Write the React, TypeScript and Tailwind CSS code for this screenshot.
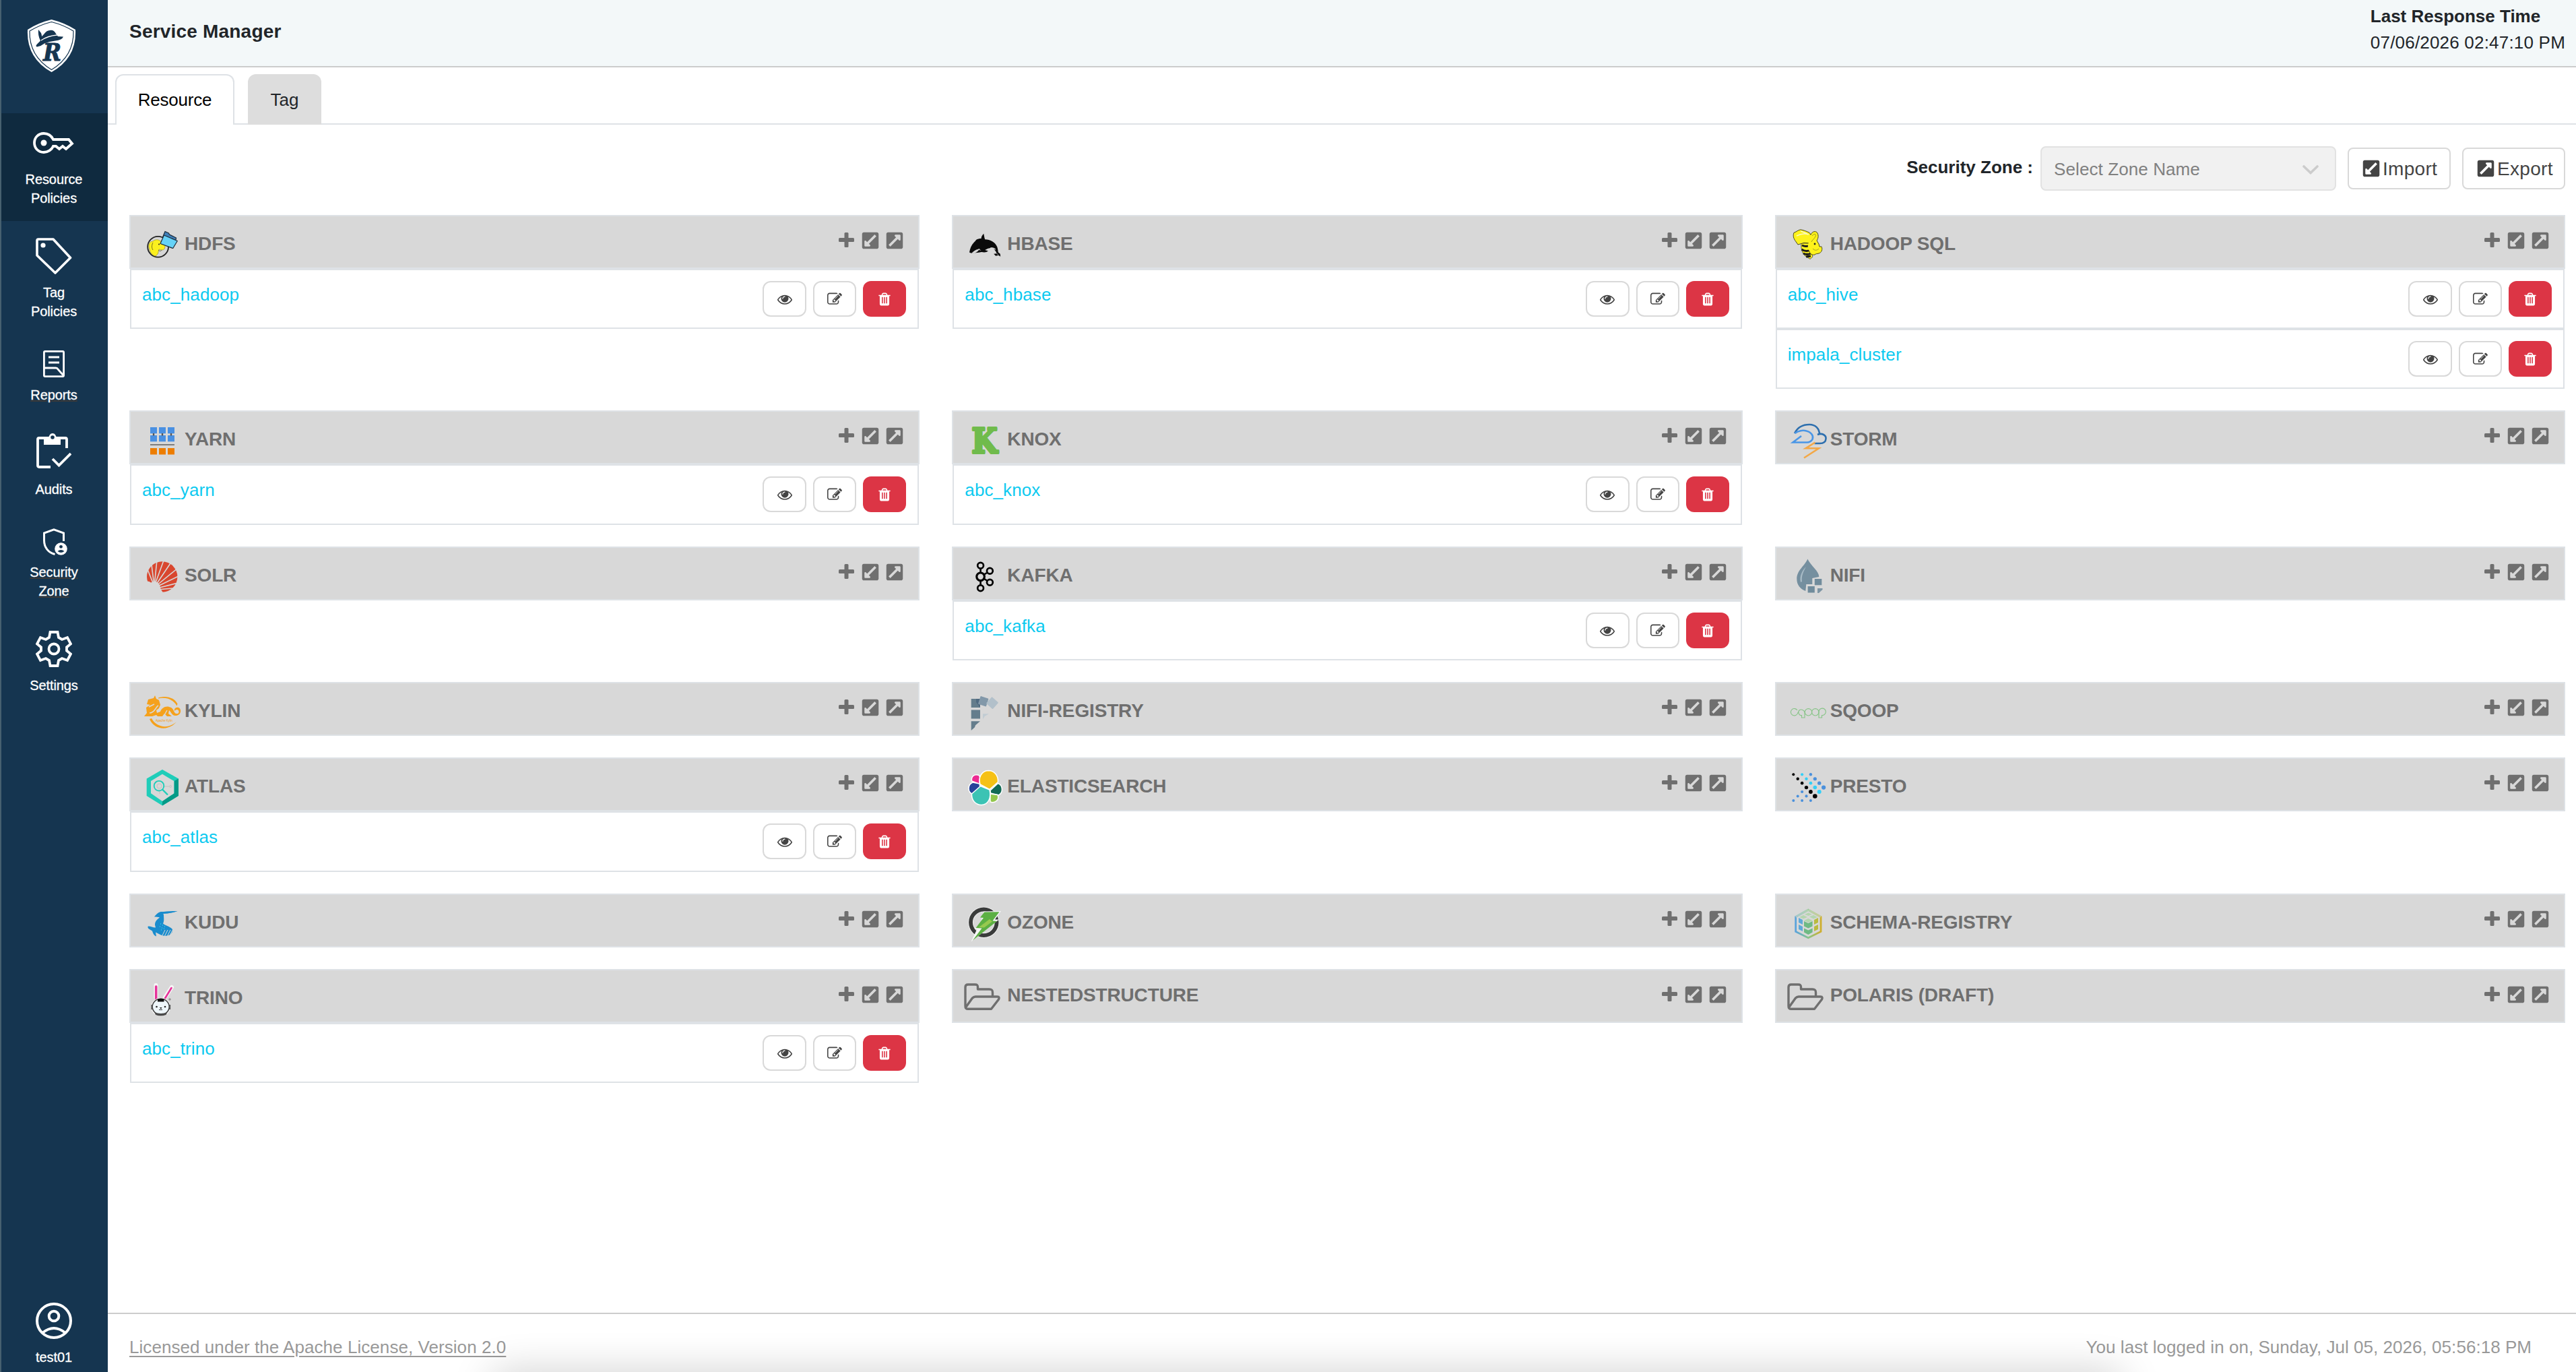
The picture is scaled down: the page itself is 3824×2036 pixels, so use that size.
import React from "react";
import { FaExternalLinkSquareAlt } from "react-icons/fa";

const GREY = "#d8d8d8";

/* ---------- service logos, drawn in a 60x60 window of the card header ---------- */

const logos: Record<string, React.ReactNode> = {
  hdfs: (
    <g>
      <circle cx="42.6" cy="47.3" r="15.4" fill="#d6d6d6" stroke="#222" strokeWidth="1.8" />
      <path d="M29.500 50c-2-6 1-11 5.500-11 3-3 9-3 11 0 4 0 7 3 7 6 0 5-1 7-5 7-2 0-3-1-4-1l-1 4c0 3-2 4-4 6-5-1-7-4-8.500-8z" fill="#fbf01e" stroke="#8b8420" strokeWidth=".6" />
      <path d="M35 41c-2 4-2 8 0 11M43 52c2 2 4 2 5 0" fill="none" stroke="#55511a" strokeWidth=".8" />
      <circle cx="44" cy="43.500" r="1" fill="#222" />
      <path d="M49.500 33l3.500-8.500 5.500 2.500 1 2 10 5-1 5z" fill="#3f7fb8" stroke="#1d2b3a" strokeWidth="1.200" />
      <path d="M51.500 30L71.300 38.500 64.700 49.500 46 42.500z" fill="#66d2f7" stroke="#1d2b3a" strokeWidth="1.200" strokeLinejoin="round" />
    </g>
  ),
  yarn: (
    <g>
      {[31, 44, 57].map((x) => (
        <g key={x}>
          <rect x={x} y="25" width="10" height="9.300" fill="#4a90e2" />
          <rect x={x} y="37" width="10" height="9.300" fill="#4a90e2" />
          <rect x={x + 3.8} y="34" width="2.400" height="3.500" fill="#555" />
          <rect x={x} y="56" width="10" height="9.500" fill="#ed7d00" />
        </g>
      ))}
      <rect x="31" y="50" width="36" height="2" fill="#7d7d7d" />
    </g>
  ),
  solr: (
    <g>
      <circle cx="48.700" cy="45" r="22.700" fill="#d9472f" />
      <path d="M37 59L24 52M37 59L27 34M37 59L33 27M37 59L41 20M37 59L52 18M38 59L63 22M39 59L72 32M40 60L75 43M41 62L76 53M42 64L75 61" stroke={GREY} strokeWidth="1.600" />
      <path d="M22 51L29.500 52 32 53.500 38 51.500 42 53.500 45 57 46 60.500 46.500 63 51 70H22z" fill={GREY} />
    </g>
  ),
  kylin: (
    <g fill="#f5a11c">
      <path d="M43 23.500c12-4 24 0 28.500 9l-1 3C65 26 55 22 43 24.500z" />
      <path d="M30 55l3-1c7 13 24 17 37 5-11 14-33 13-40-4z" />
      <path d="M28 26l8-2 2-4 2 5 4 2 2 7-2 5-4 3 1 4 5-2c2-6 9-10 16-6 5 3 4 9 8 9 4 1 5-5 1-6-2 0-3 1-4 2-1-4 3-6 6-5 5 2 4 11-3 12-7 1-8-6-11-8l-1 5 5 4h-7l-4-4-3 4h-7l-2-2-6 2H22l4-5-1-8 6-4-5-1z" />
      <path d="M30 46c8 0 9-9 13-11M51 51l5-9M29 37l8-4" stroke={GREY} strokeWidth="1.500" fill="none" />
      <text x="39" y="58.500" fontSize="4.500" textLength="25" fontFamily="Liberation Sans">Apache Kylin</text>
    </g>
  ),
  atlas: (
    <g>
      <path d="M49 18l24 13.500v25L49 71.500 25.700 57V31.500z" fill="#20cdb9" />
      <path d="M73 31.500v25.500L49 71.500V64l17.500-10.500V35z" fill="#049a87" />
      <path d="M49 24.800l17.300 10.200v18.300L49 65 32 53.300V35z" fill={GREY} />
      <path d="M50 43h9M45 49v5" stroke="#bdbdbd" strokeWidth=".8" />
      <circle cx="61" cy="43" r="1.500" fill="none" stroke="#bdbdbd" strokeWidth=".7" />
      <circle cx="44.500" cy="42.500" r="3.500" fill="none" stroke="#bdbdbd" strokeWidth=".8" />
      <circle cx="44" cy="42.200" r="7.300" fill="none" stroke="#20cdb9" strokeWidth="1.900" />
      <path d="M49 47.500l8 8" stroke="#20cdb9" strokeWidth="2.400" />
    </g>
  ),
  kudu: (
    <g>
      <path d="M71.700 26c-8-.5-17 1-25 1-4 1-7 4-9.700 7.500 3 0 6 0 8 1-4 3-7 6-7 11l1 4c-4 0-7-2-11-2-1 1-.5 3 1 4l5 3c1 4 3 7 6 8l-1-6 8 4c5 2 12 2 15-2 3-3 3-7-1-9-4-3-8-3-11-6 2-4 1-8 1-14 7 0 14-1 20.700-4z" fill="#1a8ccd" />
      <path d="M50 29.500q11 0 23-4v6H51z" fill={GREY} />
      <path d="M46 27.500q13 0 25.500-1.500-11 4-22 4z" fill="#1a8ccd" />
      <path d="M52 64l5-10M56 64l5-10M60 62.500l4-8M49 62l4-8" stroke={GREY} strokeWidth="1" />
      <path d="M46 45h1M49 47h1M45 49h1M48 51h1M52 49h1M47 54h1M51 52h1" stroke="#2fd0f0" strokeWidth="1.300" />
    </g>
  ),
  trino: (
    <g>
      <path d="M39.500 42V24M53 42l10-15" stroke="#f6f6f6" strokeWidth="6" strokeLinecap="round" />
      <path d="M39.700 44V26" stroke="#e6329a" strokeWidth="3.500" strokeLinecap="round" />
      <path d="M53 43.500L62.500 28" stroke="#e6329a" strokeWidth="2.600" strokeLinecap="round" />
      <ellipse cx="46.700" cy="56.500" rx="14.300" ry="13.800" fill="#f4f4f4" />
      <ellipse cx="46.700" cy="56" rx="12.500" ry="11.700" fill="#eef6fa" stroke="#3c3c3c" strokeWidth="1.500" />
      <path d="M42 44.500q5-1.500 9.500 0v4h-9.500z" fill="#111" />
      <path d="M33.500 53v7M60 53v7" stroke="#555" strokeWidth="2.200" />
      <path d="M37 64q10 4 19.500 0l-2 4q-8 3-15.500 0z" fill="#4a4a4a" />
      <circle cx="40.500" cy="56" r="1.300" fill="#222" />
      <circle cx="53" cy="56" r="1.300" fill="#222" />
      <path d="M45.500 57.500h2.500l-1.200 1.500zM44 60.500h5" stroke="#222" strokeWidth=".9" fill="#222" />
      <path d="M60 43v4M58 45h4" stroke="#777" strokeWidth=".8" />
    </g>
  ),
  hbase: (
    <g>
      <path d="M47.200 27.800c.8 3 1 6 2 8.500 8 0 15 4 18 11 1 3 1.500 6 1.500 8l3 2.500.5 4-3-2-4 1-3-3 4-.5c0-3-3-7-8-8.500-5 1-9 2.500-10 5-6 2-13 3-20 2.700l-2.200-1c1-6 3-11 7-15l2-2 1-1.500c2-1.500 5-2 7.500-2 .5-3 1.500-5 3.700-7.200z" fill="#0a0a0a" />
      <path d="M30 56.500c5-5 8-5 11-6-2 3-5 5-7 6zM57 49c3-1 6 0 8 2-3-.5-6 0-8 0zM65 56l4 3" fill={GREY} stroke={GREY} strokeWidth=".7" />
      <path d="M40 51q7 5 14 1" fill="none" stroke={GREY} strokeWidth="1" />
      <path d="M40 53.500q6-3.500 14 0-5 4-14 0z" fill="#0a0a0a" />
    </g>
  ),
  knox: (
    <g>
      <text x="29.500" y="63" fontFamily="DejaVu Serif" fontWeight="bold" fontSize="51" textLength="38" lengthAdjust="spacingAndGlyphs" fill="#70bb4c" stroke="#70bb4c" strokeWidth="4" strokeLinejoin="round">K</text>
    </g>
  ),
  kafka: (
    <g fill="none" stroke="#000">
      <path d="M42.600 33v5M42.600 51v6M48 41.500l4-2.500M48 48l4 2.500" strokeWidth="2.600" />
      <circle cx="42.600" cy="44.800" r="5.800" strokeWidth="3.200" />
      <circle cx="42.600" cy="28.300" r="4.400" strokeWidth="2.700" />
      <circle cx="42.600" cy="61.800" r="4.400" strokeWidth="2.700" />
      <circle cx="56.400" cy="36.300" r="4.400" strokeWidth="2.700" />
      <circle cx="56.400" cy="53.300" r="4.400" strokeWidth="2.700" />
    </g>
  ),
  hive: (
    <g strokeLinejoin="round">
      <path d="M39 42c-1 7 1 15 6 19l7 4.500 4-3.500c-3-7-1-14-3-20z" fill="#fdf21c" stroke="#333" strokeWidth=".7" />
      <path d="M40 45c4 2 8 2 12 0M39.500 51c4 3 9 3 13 1M42 57c4 2 7 2 11 0M46 62l7-1" stroke="#1b1b1b" strokeWidth="3" fill="none" />
      <path d="M37.500 21.800c-4 1-7 4-9.500 4.500-2 5 0 9 2 12l4 5.500 9-2.500 10 1 3-8-5-8c-4-2-9-4-13.500-4.500z" fill="#fdf21c" />
      <path d="M53 42l-10-.7-9 2.700-4-5.700c-2-3-4-7-2-12 2.500-.5 5.500-3.500 9.500-4.500 4.500.5 9.500 2.500 13.500 4.500l2 3" fill="none" stroke="#4c4a1c" strokeWidth="1" />
      <path d="M32 31c6-3 12-4 18-2M38 24l10 4" stroke="#f9f9c0" strokeWidth="1.500" fill="none" />
      <path d="M53 30c2-6 8-7 10-3 2 4 1 8-1 11l3 5 1 4 3 0c2 4 0 9-4 10-3 1-4 0-6 2-4 1-7-1-8-5-3-6-3-11 1-17z" fill="#fdf21c" />
      <path d="M53 29.500c2-5.500 8-6.500 10-2.500 2 4 1 8-1 11l3 5 1 4h3c2 4 0 9-4 10-3 1-4 0-6 2-4 1-7-1-8-5" fill="none" stroke="#4c4a1c" strokeWidth="1" />
      <path d="M55 31c3-4 7-3 5 1s-5 5-6 8M56 50c3 3 6 3 9 0" fill="none" stroke="#8f8a20" strokeWidth=".8" />
      <circle cx="59" cy="43" r="1.400" fill="#222" />
    </g>
  ),
  storm: (
    <g fill="none">
      <path d="M29 34c4-8 12-13 22-13 9 0 15 6 15 15M63 36c7-3 13 1 12.500 6-.3 5-4 7-9 7h-8" stroke="#2d6fae" strokeWidth="2.600" />
      <path d="M29.500 34c5-4 12-5 17-3.500 8 2 11 8 9 12.500-2 3-5 4.500-8 4.500H26.500L39 38" stroke="#4a96e6" strokeWidth="2.600" />
      <path d="M59.500 47.500L45.500 56.300H65L43 70.500" stroke="#f3a847" strokeWidth="2.600" />
    </g>
  ),
  nifi: (
    <g>
      <path d="M48.300 18.400C44 29 32.300 35 32.300 48c0 9 5 15 13 18l1-10h9v-9l10-2c0-9-12-16-17-26.600z" fill="#758f9f" />
      <path d="M38 53c-2-9 2-17 8-23-4 8-7 13-6 22z" fill="#a8bbc6" />
      <rect x="58.800" y="48" width="10.500" height="9.300" fill="#718c9c" />
      <rect x="48.600" y="59" width="10.200" height="9.500" fill="#718c9c" />
      <path d="M63 62h7.500v2L65 69h-2z" fill="#7d95a4" />
    </g>
  ),
  nifireg: (
    <g>
      <path d="M28.700 25H42v13H28.700zM28.700 41.400H42v13.200H28.700zM28.700 58.300H42l-7 6-1 3-5.300 4.700z" fill="#647d8c" />
      <path d="M36 25h6v13l-6-8z" fill="#4f6a80" />
      <rect x="40.500" y="22.500" width="12.500" height="12.500" rx="1" transform="rotate(18 46.700 28.700)" fill="#8298a9" />
      <rect x="53.500" y="24.700" width="13" height="13" rx="1" transform="rotate(42 60 31.200)" fill="#b2c0ca" />
      <path d="M46 47.300h9l-6 3.500-3 4.500z" fill="#c1ccd3" />
    </g>
  ),
  elastic: (
    <g stroke="#fff" strokeWidth="1.500" strokeLinejoin="round">
      <path d="M29.500 35c-1-7 4-11 11-8.500l1 3-.5 10z" fill="#ec2a92" />
      <path d="M31 37l10 2 1 6-11 9.500c-8-3-8-14 0-17.500z" fill="#27439a" />
      <path d="M68.500 38.500c8 3 7.500 14 1 17.500l-12-3-.5-4z" fill="#136a55" />
      <path d="M57 54l11 1.500c3 7-3 13-11 10.500z" fill="#93c64c" />
      <path d="M42 40c-3-10 2-20 12-20.500 9 0 15 7 14.500 17L56 47.500z" fill="#f6c115" />
      <path d="M42.500 42.500L56 48c3 12-2 22-12 22.500-9 0-15-7-14.500-16.500z" fill="#3cc3b4" />
    </g>
  ),
  ozone: (
    <g>
      <circle cx="47.300" cy="42.800" r="19.300" fill="none" stroke="#f2f2f2" strokeWidth="7.600" />
      <circle cx="47.300" cy="42.800" r="19.300" fill="none" stroke="#3a3b3b" strokeWidth="5.800" />
      <path d="M47.300 26.500L73 26l-9 12.500h6L28.500 71.500l9-19h-4l9.500-10z" fill="#f6f6f6" />
      <path d="M48.300 27.500L70.500 27.200 60.500 40.400l6.500.6L31 69.500 44.500 51.500l-9-.5L47 36l-5-.5z" fill="#5cb043" />
      <path d="M56 38l-8 6-8 6 8 .5 12-9z" fill="#97c94f" />
    </g>
  ),
  folder: (
    <g fill="none" stroke="#6f6f6f" strokeWidth="3.400" strokeLinejoin="round">
      <path d="M60.500 40v-5c0-3.500-1-5-5-5H38.500v-3c0-3-1-4-4-4H24c-3 0-4 1.500-4 4v28c0 3 1 4.300 4 4.300h34.500L69.500 45c1-2 1-4-2-4H35c-2 0-3 .5-4.500 2L20.500 57" />
    </g>
  ),
  sqoop: (
    <g fill="none" stroke="#86c486" strokeWidth="1.100">
      <path d="M33 42a5.200 5.200 0 1 0 0 5.500l3-5.500a5.200 5.200 0 0 1 8 3v8h-4.500v-3.500h-2a5.200 5.200 0 0 1-2-7" />
      <circle cx="49.500" cy="44.800" r="5.200" />
      <circle cx="59.800" cy="44.800" r="5.200" />
      <path d="M65 53v-8a5.200 5.200 0 1 1 5.500 4.500h-1V53H65z" />
    </g>
  ),
  presto: (
    <g>
      {[
        [0, 0, 0, 2], [1, 1, 0, 2.2], [2, 2, 0, 2.3], [3, 3, 0, 2.7], [4, 4, 0, 2.9], [5, 5, 0, 3.3],
        [2, 0, 1, 2.1], [3, 1, 1, 2.2], [4, 2, 1, 2.4], [5, 3, 1, 2.8], [6, 4, 1, 3],
        [4, 0, 2, 2.2], [5, 1, 2, 2.6], [6, 2, 2, 2.7], [7, 3, 2, 3.1],
        [2, 4, 2, 2.1], [1, 5, 2, 2], [3, 5, 2, 2.1], [0, 6, 2, 2], [2, 6, 2, 2], [4, 6, 2, 2],
      ].map(([c, r, k, s]) => (
        <circle key={`${c}-${r}`} cx={27.3 + c * 6.4} cy={25.3 + r * 6.43} r={s} fill={["#000", "#33cff7", "#4a90dc"][k]} />
      ))}
    </g>
  ),
  schema: (
    <g>
      <defs>
        <linearGradient id="schemaEdge" x1="0" x2="1" y1="0" y2="0">
          <stop offset="0" stopColor="#5aa3dc" />
          <stop offset=".5" stopColor="#86c58a" />
          <stop offset="1" stopColor="#cfae2c" />
        </linearGradient>
      </defs>
      <path d="M49.300 24.200L68 34.500v22L49.300 65.800 30.700 56.500v-22z" fill="none" stroke="url(#schemaEdge)" strokeWidth="2.800" />
      <path d="M49.300 24.200L68 34.500M49.300 24.200L30.700 34.500" stroke="#c6d9c0" strokeWidth="2.800" opacity=".7" />
      <path d="M35 36l6 3v7l-6-3zM35 46l6 3v7l-6-3z" fill="#5fa9d8" />
      <path d="M64 36l-6 3v7l6-3zM64 46l-6 3v7l6-3z" fill="#b9bb3f" />
      <path d="M43 41l6.300 3 6.300-3v7.500l-6.300 3-6.300-3zM43 51.500l6.300 3 6.300-3v6l-6.300 3.500-6.300-3.500z" fill="#6fba84" />
      <path d="M43 40l6.300-3 6.300 3-6.300 3zM36 35l6-3 6 3-6 2.500zM51 34.500l6-2.500 6 3-6 2.500zM44 31l5.500-2.500L55 31l-5.500 2z" fill="#b4d6ae" />
    </g>
  ),
};

const Logo = ({ name }: { name: string }) => (
  <svg viewBox="16 14 62 60" className="h-[60px] w-[62px] shrink-0 overflow-visible">{logos[name]}</svg>
);

/* ---------- small glyphs ---------- */

const Glyph = ({ d }: { d: string }) => (
  <svg viewBox="0 0 1792 1792" className="size-[22px]" fill="currentColor"><path d={d} /></svg>
);

const EYE = "M1664 960q-152-236-381-353 61 104 61 225 0 185-131.5 316.5t-316.5 131.5-316.5-131.5-131.5-316.5q0-121 61-225-229 117-381 353 133 205 333.5 326.5t434.5 121.5 434.5-121.5 333.5-326.5zm-720-384q0-20-14-34t-34-14q-125 0-214.5 89.5t-89.5 214.5q0 20 14 34t34 14 34-14 14-34q0-86 61-147t147-61q20 0 34-14t14-34zm848 384q0 34-20 69-140 230-376.5 368.5t-499.5 138.5-499.5-139-376.5-368q-20-35-20-69t20-69q140-229 376.5-368t499.5-139 499.5 139 376.5 368q20 35 20 69z";
const EDIT = "M888 1184l116-116-152-152-116 116v56h96v96h56zm440-720q-16-16-33 1l-350 350q-17 17-1 33t33-1l350-350q17-17 1-33zm80 594v190q0 119-84.5 203.5t-203.5 84.5h-832q-119 0-203.5-84.5t-84.5-203.5v-832q0-119 84.5-203.5t203.5-84.5h832q63 0 117 25 15 7 18 23 3 17-9 29l-49 49q-14 14-32 8-23-6-45-6h-832q-66 0-113 47t-47 113v832q0 66 47 113t113 47h832q66 0 113-47t47-113v-126q0-13 9-22l64-64q15-15 35-7t20 29zm-96-738l288 288-672 672h-288v-288zm444 132l-92 92-288-288 92-92q28-28 68-28t68 28l152 152q28 28 28 68t-28 68z";
const TRASH = "M704 1376v-704q0-14-9-23t-23-9h-64q-14 0-23 9t-9 23v704q0 14 9 23t23 9h64q14 0 23-9t9-23zm256 0v-704q0-14-9-23t-23-9h-64q-14 0-23 9t-9 23v704q0 14 9 23t23 9h64q14 0 23-9t9-23zm256 0v-704q0-14-9-23t-23-9h-64q-14 0-23 9t-9 23v704q0 14 9 23t23 9h64q14 0 23-9t9-23zm-544-992h448l-48-117q-7-9-17-11h-317q-10 2-17 11zm928 32v64q0 14-9 23t-23 9h-96v948q0 83-47 143.5t-113 60.5h-832q-66 0-113-58.5t-47-141.5v-952h-96q-14 0-23-9t-9-23v-64q0-14 9-23t23-9h309l70-167q15-37 54-63t79-26h320q40 0 79 26t54 63l70 167h309q14 0 23 9t9 23z";

const Plus = () => (
  <svg viewBox="0 0 23 22" className="h-[22px] w-[23px]" fill="currentColor">
    <rect x="0" y="8" width="23" height="6" rx="1.500" />
    <rect x="8.500" y="0" width="6" height="22" rx="1.500" />
  </svg>
);

const HeaderActions = () => (
  <div className="flex pt-6 text-[#6f6f6f]">
    <Plus />
    <FaExternalLinkSquareAlt className="ml-2.5 -mt-0.5 size-7 rotate-180" />
    <FaExternalLinkSquareAlt className="ml-2 -mt-0.5 size-7" />
  </div>
);

/* ---------- service cards ---------- */

type Service = { name: string; logo: string; items?: string[]; tall?: boolean };

const Card = ({ name, logo, items = [], tall = false }: Service) => (
  <div>
    <div className="flex h-20 justify-between border-2 border-[#dee2e6] bg-[#d8d8d8] pr-[21px]">
      <div className="flex pl-[14px]">
        <div className="pt-3"><Logo name={logo} /></div>
        <div className={`pl-1 text-[28px] font-bold leading-8 tracking-[-0.15px] text-[#6f6f6f] ${logo === "folder" ? "pt-[21px]" : "pt-[25px]"}`}>{name}</div>
      </div>
      <HeaderActions />
    </div>
    <div className="mx-px">
      {items.map((item) => (
        <div key={item} className={`flex justify-between border-2 border-[#dee2e6] bg-white pl-4 pr-[17px] ${tall ? "h-[90px]" : "h-[89px]"}`}>
          <a className="pt-5 text-[26px] leading-8 tracking-[0.1px] text-[#0dcaf0]">{item}</a>
          <div className="flex gap-2.5 pt-4">
            <button className="flex h-[53px] w-[65px] items-center justify-center rounded-xl border-2 border-[#d9d9d9] text-[#444]"><Glyph d={EYE} /></button>
            <button className="flex h-[53px] w-16 items-center justify-center rounded-xl border-2 border-[#d9d9d9] text-[#444]"><Glyph d={EDIT} /></button>
            <button className="flex h-[53px] w-16 items-center justify-center rounded-xl bg-[#dc3545] text-white"><Glyph d={TRASH} /></button>
          </div>
        </div>
      ))}
    </div>
  </div>
);

const services: Service[] = [
  { name: "HDFS", logo: "hdfs", items: ["abc_hadoop"] },
  { name: "HBASE", logo: "hbase", items: ["abc_hbase"] },
  { name: "HADOOP SQL", logo: "hive", items: ["abc_hive", "impala_cluster"] },
  { name: "YARN", logo: "yarn", items: ["abc_yarn"], tall: true },
  { name: "KNOX", logo: "knox", items: ["abc_knox"], tall: true },
  { name: "STORM", logo: "storm" },
  { name: "SOLR", logo: "solr" },
  { name: "KAFKA", logo: "kafka", items: ["abc_kafka"] },
  { name: "NIFI", logo: "nifi" },
  { name: "KYLIN", logo: "kylin" },
  { name: "NIFI-REGISTRY", logo: "nifireg" },
  { name: "SQOOP", logo: "sqoop" },
  { name: "ATLAS", logo: "atlas", items: ["abc_atlas"], tall: true },
  { name: "ELASTICSEARCH", logo: "elastic" },
  { name: "PRESTO", logo: "presto" },
  { name: "KUDU", logo: "kudu" },
  { name: "OZONE", logo: "ozone" },
  { name: "SCHEMA-REGISTRY", logo: "schema" },
  { name: "TRINO", logo: "trino", items: ["abc_trino"] },
  { name: "NESTEDSTRUCTURE", logo: "folder" },
  { name: "POLARIS (DRAFT)", logo: "folder" },
];

/* ---------- sidebar ---------- */

const NavText = ({ lines, underline = false }: { lines: string[]; underline?: boolean }) => (
  <div className={`text-center text-[20px] leading-7 text-white tracking-[-0.1px] [-webkit-text-stroke:0.3px_white] ${underline ? "underline decoration-[#3a3a3a]" : ""}`}>
    {lines.map((l) => <div key={l}>{l}</div>)}
  </div>
);

const Sidebar = () => (
  <aside className="flex w-40 shrink-0 flex-col items-center border-l-2 border-[#47606f] bg-[#153550] pr-0.5">
    <div className="flex h-[168px] justify-center pr-[7px] pt-[29px]">
      <svg viewBox="0 0 73 78" className="h-[78px] w-[73px]">
        <path d="M36.500 0q20 5 35.500 15 2 42-35.500 63Q-1 57 1 15 16 5 36.500 0z" fill="#fff" />
        <path d="M36.500 3.500Q54 8 69 17q1 37-32.500 57.500Q3 54 4 17 19 8 36.500 3.500z" fill="none" stroke="#153550" strokeWidth="1.200" />
        <path d="M17 15l4 5q1 3 1 5l3-3q4-6 9-6 6-1 9 5l3 4q5 0 8 .5-2 5-12 6-9 1-16 4-5 4-11 5-3-1 0-4l5-5q-4-8-3-16.500z" fill="#153550" />
        <path d="M21 31q10-7 24-8" stroke="#fff" strokeWidth="1.500" fill="none" />
        <text x="24" y="61" fontFamily="DejaVu Serif" fontStyle="italic" fontWeight="bold" fontSize="35" textLength="27" lengthAdjust="spacingAndGlyphs" fill="#153550" stroke="#153550" strokeWidth="1">R</text>
      </svg>
    </div>
    <div className="-mr-0.5 flex h-40 w-[158px] flex-col items-center bg-[#0f2a3f] pr-0.5 pt-7">
      <svg viewBox="0 0 62 32" className="mb-6 h-8 w-[62px]" fill="none" stroke="#fff" strokeWidth="3.800">
        <path d="M30 11C27 5 22 2 16 2 8 2 2 8 2 16s6 14 14 14c6 0 12-4 14-9h4l5 4 5-4 5 4 9-8-5-6z" />
        <circle cx="16" cy="16" r="4.500" fill="#fff" stroke="none" />
      </svg>
      <NavText lines={["Resource", "Policies"]} />
    </div>
    <div className="flex h-[192px] flex-col items-center pt-[25px]">
      <svg viewBox="0 0 54 54" className="mb-[13px] size-[54px]" fill="none" stroke="#fff" strokeWidth="3.600" strokeLinejoin="round">
        <path d="M2 4q0-2 2-2h22l25.500 27.500L29 52 2 26z" />
        <circle cx="11" cy="11" r="3.600" fill="#fff" stroke="none" />
      </svg>
      <NavText lines={["Tag", "Policies"]} />
    </div>
    <div className="flex h-[123px] flex-col items-center">
      <svg viewBox="0 0 32 40" className="mb-3 h-10 w-8" fill="none" stroke="#fff" strokeWidth="2.800">
        <rect x="1.400" y="1.400" width="29.200" height="37.200" rx="1.500" />
        <path d="M8 10h16M8 18h16M1 26h18q2 0 3 2l8 9" />
      </svg>
      <NavText lines={["Reports"]} underline />
    </div>
    <div className="flex h-[141px] flex-col items-center">
      <svg viewBox="0 0 52 52" className="mb-[17px] size-[52px]" fill="none" stroke="#fff" strokeWidth="3.800">
        <path d="M21 50H4q-2 0-2-2V9q0-2 2-2h39q2 0 2 2v13M24 38l9.500 9.500L51 30" />
        <path d="M11 8h7q1-8 6-8t6 8h6v9H11z" fill="#fff" stroke="none" />
        <circle cx="24" cy="6" r="2.800" fill="#153550" stroke="none" />
      </svg>
      <NavText lines={["Audits"]} />
    </div>
    <div className="flex h-[152px] flex-col items-center pl-1">
      <svg viewBox="0 0 36 40" className="mb-[11px] h-10 w-9" fill="none" stroke="#fff" strokeWidth="3">
        <path d="M30.500 19V7L16 1.800 1.500 7v11c0 10 6 18 16 20.500" />
        <circle cx="26.500" cy="30.500" r="9.300" fill="#fff" stroke="none" />
        <circle cx="26.500" cy="27.300" r="2.400" fill="#153550" stroke="none" />
        <path d="M21.500 34q5-4 10 0-5 4-10 0z" fill="#153550" stroke="none" />
      </svg>
      <div className="pr-1"><NavText lines={["Security", "Zone"]} underline /></div>
    </div>
    <svg viewBox="0 0 54 54" className="mb-[13px] size-[54px] shrink-0" fill="none" stroke="#fff" strokeWidth="3.800">
      <path d="M21.500 2h11l1.500 8 5 3 8-3 5 9.500-6 5v5l6 5-5 9.500-8-3-5 3-1.500 8h-11L20 44l-5-3-8 3-5-9.500 6-5v-5l-6-5L7 10l8 3 5-3z" />
      <circle cx="27" cy="27" r="7.500" />
    </svg>
    <NavText lines={["Settings"]} />
    <div className="mt-auto flex flex-col items-center pb-2">
      <svg viewBox="0 0 54 54" className="mb-[13px] size-[54px]" fill="none" stroke="#fff" strokeWidth="4">
        <circle cx="27" cy="27" r="25" />
        <circle cx="27" cy="20" r="7.300" />
        <path d="M10 45q17-14 34 0" />
      </svg>
      <NavText lines={["test01"]} />
    </div>
  </aside>
);

export default function App() {
  return (
    <div className="relative flex h-[2036px] w-[3824px] overflow-hidden bg-white font-['Liberation_Sans',sans-serif] text-[#212529]">
      <Sidebar />
      <main className="flex min-w-0 flex-1 flex-col">
        <header className="flex h-[100px] shrink-0 justify-between border-b-2 border-[#ccc] bg-[#f3f8f9] pl-8 pr-4">
          <h1 className="pt-[31px] text-[28px] font-bold leading-8 tracking-[0.2px]">Service Manager</h1>
          <div className="pt-[5px] text-[26px] leading-[39px]">
            <div className="font-bold">Last Response Time</div>
            <div className="tracking-[0.2px]">07/06/2026 02:47:10 PM</div>
          </div>
        </header>

        <div className="flex h-[85px] shrink-0 border-b-2 border-[#dee2e6] pl-[11px] pt-2.5 text-[26px] leading-[38px]">
          <div className="h-[75px] w-[177px] rounded-t-[12px] border-2 border-b-0 border-[#dee2e6] bg-white pt-[17px] text-center text-black tracking-[-0.2px]">Resource</div>
          <div className="ml-5 h-[75px] w-[109px] rounded-t-[12px] bg-[#ddd] pt-[19px] text-center">Tag</div>
        </div>

        <div className="flex h-[134px] shrink-0 items-start justify-end pr-4 pt-8 text-[26px]">
          <span className="pr-[11px] pt-[15px] font-bold leading-8">Security Zone :</span>
          <div className="flex h-[66px] w-[439px] items-center justify-between rounded-lg border-2 border-[#e2e2e2] bg-[#f1f1f1] pl-[18px] pr-6 text-[#808080]">
            <span className="pt-[3px] tracking-[0.1px]">Select Zone Name</span>
            <svg viewBox="0 0 24 14" className="mt-1 h-[14px] w-6" fill="none" stroke="#ccc" strokeWidth="3.600" strokeLinecap="round"><path d="M2 2l10 9.500L22 2" /></svg>
          </div>
          {["Import", "Export"].map((label) => (
            <button key={label} className="ml-[17px] mt-0.5 flex h-[62px] w-[153px] items-center rounded-lg border-2 border-[#d9d9d9] pl-[19px] text-[28px] text-[#444]">
              <FaExternalLinkSquareAlt className={label === "Import" ? "size-7 rotate-180" : "size-7"} />
              <span className="pl-[3px] pt-px tracking-[0.3px]">{label}</span>
            </button>
          ))}
        </div>

        <div className="grid grid-cols-3 content-start items-start gap-x-12 gap-y-8 pl-8 pr-4">
          {services.map((s) => <Card key={s.name} {...s} />)}
        </div>

        <footer className="mt-auto flex h-[88px] shrink-0 justify-between border-t-2 border-[#ccc] pl-8 pr-[66px] pt-[33px] text-[26px] leading-8 text-[#999]">
          <a className="tracking-[0.06px] underline decoration-2 underline-offset-4">Licensed under the Apache License, Version 2.0</a>
          <span className="tracking-[0.04px]">You last logged in on, Sunday, Jul 05, 2026, 05:56:18 PM</span>
        </footer>
      </main>
      {/* soft shadow rising from the bottom edge of the window */}
      <div className="pointer-events-none absolute left-[730px] top-[2040px] h-10 w-[2420px] rounded-[30px] shadow-[0_0_60px_4px_rgba(0,0,0,0.2)]" />
    </div>
  );
}
